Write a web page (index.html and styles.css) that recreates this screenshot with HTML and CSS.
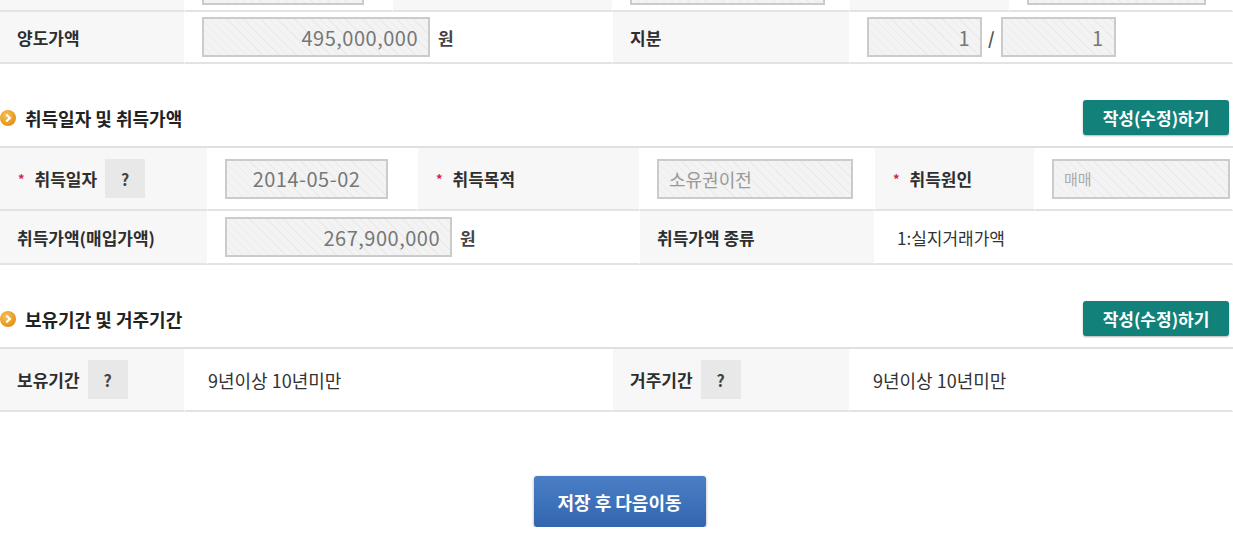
FILE: index.html
```html
<!DOCTYPE html>
<html>
<head>
  <meta charset="utf-8">
  <title>양도소득세 신고</title>
  <link rel="stylesheet" href="styles.css">
</head>
<body>
  <div id="page">
    <!-- 양도 -->
    <div class="tbl tbl-a">
      <div class="cell th"></div>
      <div class="cell td"><span class="inp w162"></span></div>
      <div class="cell th"></div>
      <div class="cell td"><span class="inp w195"></span></div>
      <div class="cell th"></div>
      <div class="cell td"><span class="inp w179"></span></div>

      <div class="cell th">양도가액</div>
      <div class="cell td span2"><span class="inp num w228">495,000,000</span><span class="unit">원</span></div>
      <div class="cell th">지분</div>
      <div class="cell td span2"><span class="inp num w115">1</span><span class="slash">/</span><span class="inp num w115">1</span></div>
    </div>

    <div class="sec-head">
      <h3><i class="bullet"></i>취득일자 및 취득가액</h3>
      <a href="javascript:;" class="btn-edit">작성(수정)하기</a>
    </div>
    <div class="tbl tbl-b">
      <div class="cell th tall"><em class="req">*</em>취득일자<span class="help">?</span></div>
      <div class="cell td tall"><span class="inp center w163">2014-05-02</span></div>
      <div class="cell th tall"><em class="req">*</em>취득목적</div>
      <div class="cell td tall"><span class="inp left w196">소유권이전</span></div>
      <div class="cell th tall"><em class="req">*</em>취득원인</div>
      <div class="cell td tall"><span class="inp left small w178">매매</span></div>

      <div class="cell th">취득가액(매입가액)</div>
      <div class="cell td span2"><span class="inp num w227">267,900,000</span><span class="unit">원</span></div>
      <div class="cell th">취득가액 종류</div>
      <div class="cell td span2 txt">1:실지거래가액</div>
    </div>

    <div class="sec-head">
      <h3><i class="bullet"></i>보유기간 및 거주기간</h3>
      <a href="javascript:;" class="btn-edit">작성(수정)하기</a>
    </div>
    <div class="tbl tbl-c">
      <div class="cell th tall">보유기간<span class="help">?</span></div>
      <div class="cell td tall txt">9년이상 10년미만</div>
      <div class="cell th tall">거주기간<span class="help">?</span></div>
      <div class="cell td tall txt">9년이상 10년미만</div>
    </div>

    <div class="foot">
      <a href="javascript:;" class="btn-next">저장 후 다음이동</a>
    </div>
  </div>
</body>
</html>
```

FILE: styles.css
```css
body{
  margin: 0;
  background: #fff;
  font-family: "Noto Sans CJK KR", "Liberation Sans", sans-serif;
  font-size: 17px;
  color: #333;
}
#page{
  width: 1233px;
  margin-top: -40px;
}
.tbl{
  display: grid;
}
.tbl-a{
  grid-template-columns: 185px 208px 220px 237px 160px 223px;
}
.tbl-b{
  grid-template-columns: 208px 210px 222px 235px 160px 198px;
  border-top: 2px solid #e0e0e0;
}
.tbl-c{
  grid-template-columns: 185px 428px 237px 383px;
  border-top: 2px solid #e0e0e0;
}
.cell{
  display: flex;
  align-items: center;
  height: 52px;
  padding: 0 17px;
  box-sizing: border-box;
  border-bottom: 2px solid #e3e3e3;
  border-right: 1px solid #fff;
  white-space: nowrap;
}
.cell.tall{
  height: 63px;
}
.tbl-b .cell:nth-child(n+7){
  height: 54px;
}
.th{
  background: #f7f7f7;
  font-weight: bold;
  color: #2e2e2e;
}
.td{
  background: #fff;
}
.span2{
  grid-column: span 2;
}
.txt{
  padding-left: 22px;
  color: #333;
}
.tbl-c .txt{
  padding-left: 23px;
  font-size: 18px;
}
.req{
  font-style: normal;
  color: #d0284a;
  font-size: 13px;
  margin: 0 10px 0 1px;
}
.help{
  display: inline-flex;
  align-items: center;
  justify-content: center;
  width: 40px;
  height: 39px;
  margin-left: 8px;
  background: #e8e8e8;
  font-weight: bold;
  font-size: 16px;
  color: #444;
}
.inp{
  display: inline-flex;
  align-items: center;
  flex-shrink: 0;
  height: 40px;
  box-sizing: border-box;
  padding: 0 10px;
  border: 2px solid #cbcbcb;
  background-color: #f3f3f3;
  background-image: repeating-linear-gradient(45deg, #f3f3f3 0, #f3f3f3 5px, #ebebeb 5px, #ebebeb 6px);
  color: #777;
  font-size: 20px;
  letter-spacing: .5px;
}
.num{
  justify-content: flex-end;
}
.center{
  justify-content: center;
}
.left{
  color: #999;
  font-size: 18px;
  letter-spacing: 0;
}
.small{
  font-size: 15px;
  color: #aaa;
}
.w115{ width: 115px; }
.w162{ width: 162px; }
.w163{ width: 163px; }
.w178{ width: 178px; }
.w179{ width: 179px; }
.w195{ width: 195px; }
.w196{ width: 196px; }
.w227{ width: 227px; }
.w228{ width: 228px; }
.unit{
  margin-left: 8px;
  font-weight: bold;
  color: #444;
}
.slash{
  margin: 0 6px 0 6px;
  font-weight: bold;
  color: #555;
}
.sec-head{
  display: flex;
  align-items: center;
  justify-content: space-between;
  margin: 36px 4px 11px 0;
}
.sec-head h3{
  display: flex;
  align-items: center;
  margin: 0;
  font-size: 18px;
  color: #222;
}
.bullet{
  position: relative;
  width: 16px;
  height: 16px;
  margin-right: 9px;
  border-radius: 50%;
  background: radial-gradient(circle at 40% 35%, #f9c25a, #e59318 70%, #d67f10);
}
.bullet:after{
  content: "";
  position: absolute;
  left: 4px;
  top: 5px;
  width: 4px;
  height: 4px;
  border-top: 2px solid #fff;
  border-right: 2px solid #fff;
  transform: rotate(45deg);
}
.btn-edit{
  display: inline-flex;
  align-items: center;
  justify-content: center;
  width: 146px;
  height: 35px;
  border-radius: 3px;
  background: #11817a;
  box-shadow: 0 1px 2px rgba(0,0,0,.3);
  color: #fff;
  font-weight: bold;
  font-size: 17px;
  text-decoration: none;
}
.foot{
  display: flex;
  justify-content: center;
  padding: 64px 0 0 6px;
}
.btn-next{
  display: inline-flex;
  align-items: center;
  justify-content: center;
  width: 172px;
  height: 51px;
  border-radius: 3px;
  background: linear-gradient(#4a7fc6, #3265ad);
  box-shadow: 0 1px 3px rgba(0,0,0,.35);
  color: #fff;
  font-weight: bold;
  font-size: 18px;
  text-decoration: none;
}
```
